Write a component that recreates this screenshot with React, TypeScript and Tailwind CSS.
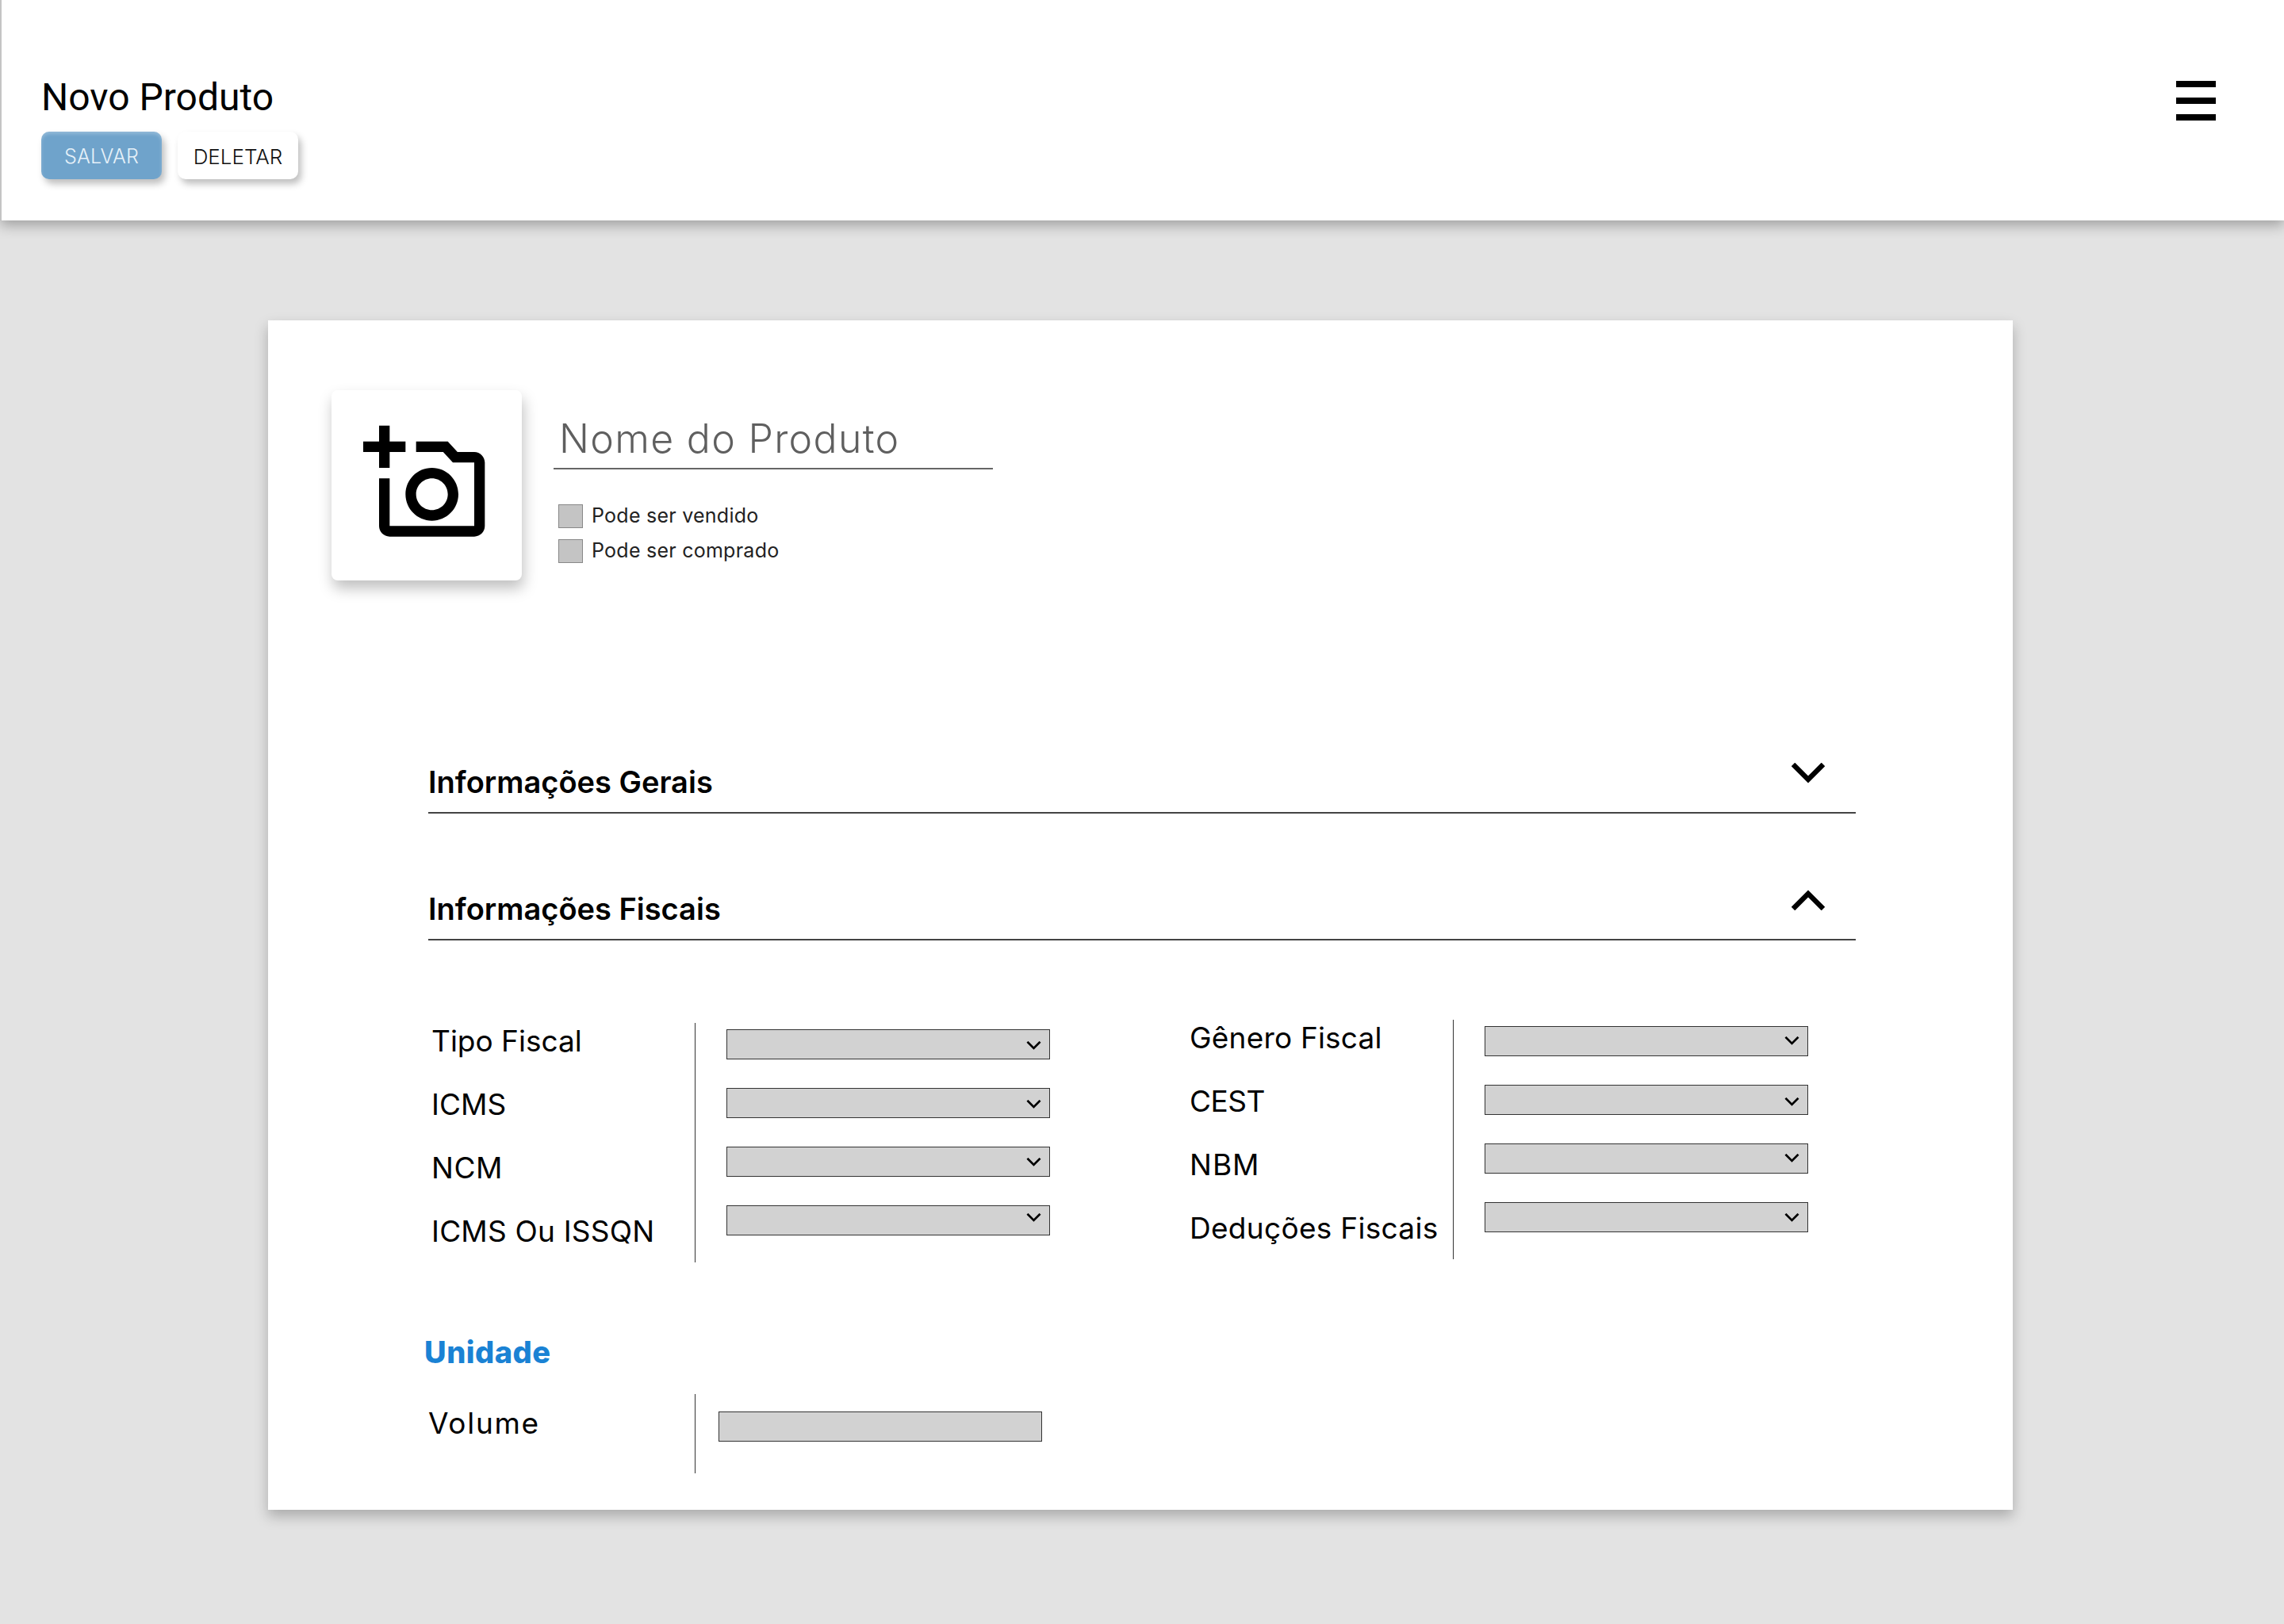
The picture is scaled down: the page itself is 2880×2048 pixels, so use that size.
import { MdOutlineAddAPhoto } from "react-icons/md";

const sans = "font-['Inter',sans-serif]";

const Chevron = ({ className, up }: { className: string; up?: boolean }) => (
  <svg className={className} viewBox="0 0 42 26" fill="none" stroke="black" strokeWidth="6.5">
    <path d={up ? "M2 24 L21 5 L40 24" : "M2 2 L21 21 L40 2"} />
  </svg>
);

const SelectBox = ({ chevron }: { chevron: string }) => (
  <div className="relative h-[38px] w-[408px]">
    <select className="block h-full w-full appearance-none border border-[#333] bg-[#d2d2d2]" />
    <Chevron className={`pointer-events-none absolute right-[11px] h-[11px] w-[19px] ${chevron}`} />
  </div>
);

type Field = { label: string; chevron: string; tracking: string };

const FieldColumn = ({ fields, className }: { fields: Field[]; className: string }) => (
  <div className={`flex items-start ${className}`}>
    <div className="w-[332px]">
      {fields.map((f) => (
        <div key={f.label} className={`flex h-[80px] items-center text-[37px] text-black ${f.tracking}`}>
          {f.label}
        </div>
      ))}
    </div>
    <div className="mt-[17px] flex h-[302px] flex-col gap-[36px] border-l border-[#333] pl-[39px] pt-[8px]">
      {fields.map((f) => (
        <SelectBox key={f.label} chevron={f.chevron} />
      ))}
    </div>
  </div>
);

const SectionHeader = ({ title, up, className }: { title: string; up?: boolean; className: string }) => (
  <div className={`ml-[202px] flex h-[76px] w-[1800px] items-start justify-between border-b-2 border-[#444] ${className}`}>
    <span className="mt-[8px] text-[38px] font-semibold text-black">{title}</span>
    <Chevron up={up} className="mr-[39px] mt-[12px] h-[26px] w-[42px]" />
  </div>
);

const leftFields: Field[] = [
  { label: "Tipo Fiscal", chevron: "top-[15px]", tracking: "tracking-[0px]" },
  { label: "ICMS", chevron: "top-[15px]", tracking: "tracking-[0px]" },
  { label: "NCM", chevron: "top-[14px]", tracking: "tracking-[0.6px]" },
  { label: "ICMS Ou ISSQN", chevron: "top-[10px]", tracking: "tracking-[0.2px]" },
];

const rightFields: Field[] = [
  { label: "Gênero Fiscal", chevron: "top-[13px]", tracking: "tracking-[0.2px]" },
  { label: "CEST", chevron: "top-[16px]", tracking: "tracking-[-0.5px]" },
  { label: "NBM", chevron: "top-[13px]", tracking: "tracking-[1px]" },
  { label: "Deduções Fiscais", chevron: "top-[14px]", tracking: "tracking-[0.3px]" },
];

export default function App() {
  return (
    <div className={`h-[2048px] w-[2880px] overflow-hidden bg-[#e3e3e3] ${sans}`}>
      <header className="relative flex h-[278px] items-start justify-between border-l-2 border-[#c4c4c4] bg-white pl-[50px] pr-[86px] shadow-[0_6px_16px_rgba(0,0,0,0.3)]">
        <div>
          <h1 className="mt-[95px] font-['Roboto',sans-serif] text-[48px] font-normal leading-[56px] text-black">Novo Produto</h1>
          <div className="mt-[15px] flex gap-[20px]">
            <button className="h-[60px] w-[152px] rounded-[10px] bg-[#6fa3cb] pt-[3px] text-[25px] font-light tracking-[0.2px] text-[#e6f1f9] shadow-[inset_0_3px_4px_rgba(255,255,255,0.25),4px_6px_8px_rgba(0,0,0,0.25)]">
              SALVAR
            </button>
            <button className="h-[60px] w-[152px] rounded-[10px] bg-white pt-[3px] text-[26px] font-light text-[#111] shadow-[4px_6px_8px_rgba(0,0,0,0.25)]">
              DELETAR
            </button>
          </div>
        </div>
        <div className="mt-[102px] flex w-[50px] flex-col gap-[13px]">
          <div className="h-[8px] bg-black" />
          <div className="h-[8px] bg-black" />
          <div className="h-[8px] bg-black" />
        </div>
      </header>

      <main className="ml-[338px] mt-[126px] h-[1500px] w-[2200px] bg-white pt-[88px] shadow-[0_8px_16px_rgba(0,0,0,0.25)]">
        <div className="ml-[80px] flex items-start">
          <div className="flex h-[240px] w-[240px] items-center justify-center rounded-[8px] bg-white pb-[4px] shadow-[2px_10px_18px_rgba(0,0,0,0.25)]">
            <MdOutlineAddAPhoto className="h-[160px] w-[160px] text-black" />
          </div>
          <div className="ml-[40px]">
            <div className="h-[100px] w-[554px] border-b-2 border-[#666] pl-[7px] pt-[34px] text-[50px] font-light leading-[54px] tracking-[1.3px] text-[#5f5f5f]">
              Nome do Produto
            </div>
            <div className="ml-[6px] mt-[44px] flex flex-col gap-[14px]">
              {["Pode ser vendido", "Pode ser comprado"].map((t) => (
                <label key={t} className="flex h-[30px] items-center gap-[11px] text-[25px] tracking-[0.25px] text-[#222]">
                  <span className="h-[30px] w-[31px] border border-[#888] bg-[#c4c4c4]" />
                  {t}
                </label>
              ))}
            </div>
          </div>
        </div>

        <SectionHeader title="Informações Gerais" className="mt-[218px]" />
        <SectionHeader title="Informações Fiscais" up className="mt-[84px]" />

        <div className="ml-[206px] mt-[83px] flex items-start gap-[176px]">
          <FieldColumn fields={leftFields} className="mt-[4px]" />
          <FieldColumn fields={rightFields} className="" />
        </div>

        <h2 className="ml-[197px] mt-[89px] text-[38px] font-extrabold leading-[46px] tracking-[0.5px] text-[#1a82d4]">Unidade</h2>

        <div className="ml-[202px] mt-[30px] flex items-start">
          <div className="flex h-[74px] w-[336px] items-center text-[37px] tracking-[1.7px] text-black">Volume</div>
          <div className="h-[100px] border-l border-[#333] pl-[29px] pt-[22px]">
            <input className="block h-[38px] w-[408px] border border-[#333] bg-[#d2d2d2]" />
          </div>
        </div>
      </main>
    </div>
  );
}
